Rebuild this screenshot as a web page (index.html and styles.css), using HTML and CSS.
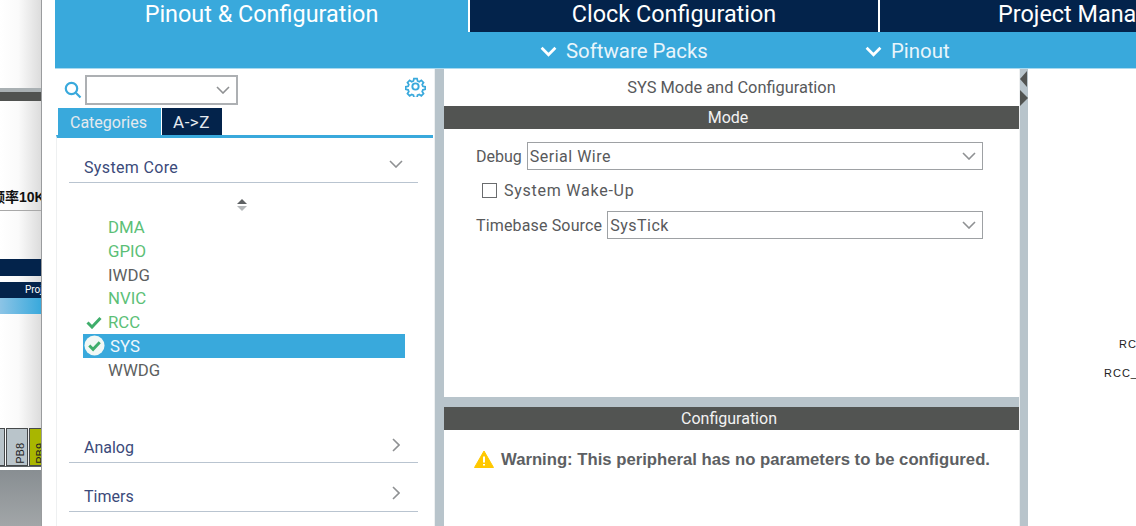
FILE: index.html
```html
<!DOCTYPE html>
<html lang="en">
<head>
    <meta charset="UTF-8">
    <meta name="viewport" content="width=device-width, initial-scale=1.0">
    <title>Pinout &amp; Configuration</title>
    <link rel="stylesheet" href="styles.css">
</head>
<body>
    <!-- window lying behind the tool -->
    <div class="back-window">
        <div class="back-bar"></div>
        <div class="back-text">频率10K</div>
        <div class="back-line"></div>
        <div class="back-navy"></div>
        <div class="back-tab">Proj</div>
        <div class="back-blue"></div>
        <div class="back-pins">
            <div class="pin"></div>
            <div class="pin"><span>PB8</span></div>
            <div class="pin pin-on"><span>PB9</span></div>
        </div>
        <div class="back-foot"></div>
    </div>

    <div class="app">
        <div class="top-tabs">
            <div class="top-tab active">Pinout &amp; Configuration</div>
            <div class="top-tab clock">Clock Configuration</div>
            <div class="top-tab project">Project Manager</div>
        </div>
        <div class="sub-bar">
            <div class="sub-item packs">
                <svg class="sub-chev" viewBox="0 0 16 10"><path d="M1.5 1.5 8 8l6.5-6.5"/></svg>
                Software Packs
            </div>
            <div class="sub-item">
                <svg class="sub-chev" viewBox="0 0 16 10"><path d="M1.5 1.5 8 8l6.5-6.5"/></svg>
                Pinout
            </div>
        </div>

        <div class="panes">
            <aside class="left-pane">
                <div class="search-row">
                    <svg class="search-icon" viewBox="0 0 18 18"><circle cx="7.5" cy="7.5" r="5.7"/><path d="M11.8 11.8 16.5 16.5"/></svg>
                    <div class="combo">
                        <svg class="chev" viewBox="0 0 14 8"><path d="M1 1l6 6 6-6"/></svg>
                    </div>
                    <svg class="gear" viewBox="0 0 24 24">
                        <circle cx="12" cy="12" r="3.6"/>
                        <path d="M10 2h4l.6 3 2.2.9 2.6-1.7 2.8 2.8-1.7 2.6.9 2.2 3 .6v3.2l-3 .6-.9 2.2 1.7 2.6-2.8 2.8-2.6-1.7-2.2.9-.6 3h-4l-.6-3-2.2-.9-2.6 1.7-2.8-2.8 1.7-2.6-.9-2.2-3-.6v-3.2l3-.6.9-2.2-1.7-2.6 2.8-2.8 2.6 1.7 2.2-.9z" transform="translate(1.2 1.2) scale(.9)"/>
                    </svg>
                </div>
                <div class="cat-tabs">
                    <div class="cat-tab active">Categories</div>
                    <div class="cat-tab">A-&gt;Z</div>
                </div>
                <div class="cat-body">
                    <div class="group-head">
                        <span>System Core</span>
                        <svg class="chev" viewBox="0 0 14 8"><path d="M1 1l6 6 6-6"/></svg>
                    </div>
                    <div class="sort-arrows">
                        <span class="sort-up"></span>
                        <span class="sort-down"></span>
                    </div>
                    <ul class="periph-list">
                        <li class="periph ok">DMA</li>
                        <li class="periph ok">GPIO</li>
                        <li class="periph">IWDG</li>
                        <li class="periph ok">NVIC</li>
                        <li class="periph ok">
                            <svg class="tick" viewBox="0 0 16 13"><path d="M1.5 6.5 6 11 14.5 2"/></svg>
                            RCC
                        </li>
                        <li class="periph selected">
                            <svg class="tick-round" viewBox="0 0 22 22"><circle cx="11" cy="11" r="10.5"/><path d="M5.5 11 9.5 15 16.5 7.5"/></svg>
                            SYS
                        </li>
                        <li class="periph">WWDG</li>
                    </ul>
                    <div class="group-head closed analog">
                        <span>Analog</span>
                        <svg class="chev-right" viewBox="0 0 8 14"><path d="M1 1l6 6-6 6"/></svg>
                    </div>
                    <div class="group-head closed timers">
                        <span>Timers</span>
                        <svg class="chev-right" viewBox="0 0 8 14"><path d="M1 1l6 6-6 6"/></svg>
                    </div>
                </div>
            </aside>

            <div class="split-v"></div>

            <section class="center-pane">
                <div class="mode-part">
                    <div class="pane-title">SYS Mode and Configuration</div>
                    <div class="dark-bar">Mode</div>
                    <div class="form-row debug-row">
                        <label class="form-label">Debug</label>
                        <div class="select">Serial Wire
                            <svg class="chev" viewBox="0 0 14 8"><path d="M1 1l6 6 6-6"/></svg>
                        </div>
                    </div>
                    <div class="check-row">
                        <span class="checkbox"></span>
                        <span>System Wake-Up</span>
                    </div>
                    <div class="form-row">
                        <label class="form-label wide">Timebase Source</label>
                        <div class="select">SysTick
                            <svg class="chev" viewBox="0 0 14 8"><path d="M1 1l6 6 6-6"/></svg>
                        </div>
                    </div>
                </div>
                <div class="split-h"></div>
                <div class="config-part">
                    <div class="dark-bar config-bar">Configuration</div>
                    <div class="warning">
                        <svg class="warn-icon" viewBox="0 0 20 18">
                            <path class="warn-tri" d="M10 1 19.5 17.5H.5z"/>
                            <path class="warn-mark" d="M10 6.5v6M10 14v1.6"/>
                        </svg>
                        Warning: This peripheral has no parameters to be configured.
                    </div>
                </div>
            </section>

            <div class="split-right">
                <span class="arrow-left"></span>
                <span class="arrow-right"></span>
            </div>

            <section class="chip-pane">
                <span class="pin-label rcc-a">RC</span>
                <span class="pin-label rcc-b">RCC_</span>
            </section>
        </div>
    </div>
</body>
</html>
```

FILE: styles.css
```css
/* Reset and Base Styles */
* {
    margin: 0;
    padding: 0;
    box-sizing: border-box;
    font-family: Roboto, 'Liberation Sans', sans-serif;
}

html, body {
    height: 526px;
    overflow: hidden;
}

body {
    display: flex;
    width: 1136px;
    background-color: #fff;
    color: #58595b;
}

svg {
    display: block;
    fill: none;
}

/* Window Behind */
.back-window {
    position: relative;
    flex: 0 0 42px;
    height: 526px;
    overflow: hidden;
    background: linear-gradient(90deg, #fff 0%, #fafafa 45%, #dcdcdc 100%);
    border-right: 1px solid #9a9c9e;
}

.back-bar {
    position: absolute;
    top: 88px;
    left: 0;
    width: 100%;
    height: 13px;
    background: linear-gradient(#a9b0b3 0 4px, #505250 4px);
}

.back-text {
    position: absolute;
    top: 188px;
    left: -9px;
    font-size: 14px;
    font-weight: bold;
    line-height: 18px;
    white-space: nowrap;
    color: #111;
    font-family: 'Liberation Sans', 'Noto Sans CJK SC', sans-serif;
}

.back-line {
    position: absolute;
    top: 210px;
    left: 0;
    width: 100%;
    height: 1px;
    background-color: #a8a8a8;
}

.back-navy {
    position: absolute;
    top: 259px;
    left: 0;
    width: 100%;
    height: 17px;
    background-color: #03234b;
}

.back-tab {
    position: absolute;
    top: 282px;
    left: 0;
    width: 100%;
    height: 16px;
    padding-left: 25px;
    background-color: #03234b;
    color: #fff;
    font-size: 10px;
    line-height: 16px;
    white-space: nowrap;
    overflow: hidden;
}

.back-blue {
    position: absolute;
    top: 298px;
    left: 0;
    width: 100%;
    height: 16px;
    background: linear-gradient(90deg, #8cc4e6, #39a9dc);
}

.back-pins {
    position: absolute;
    top: 428px;
    left: -17px;
    display: flex;
    gap: 1px;
    height: 38px;
}

.pin {
    display: flex;
    align-items: flex-end;
    justify-content: flex-end;
    width: 22px;
    background-color: #b9c4ca;
    border: 1px solid #46494b;
    padding: 0 2px 1px 0;
}

.pin span {
    writing-mode: vertical-rl;
    transform: rotate(180deg);
    font-size: 11px;
    line-height: 10px;
    font-family: 'Liberation Sans', sans-serif;
    color: #222;
}

.pin-on {
    background-color: #a9b600;
    padding-right: 5px;
}

.back-foot {
    position: absolute;
    top: 466px;
    left: 0;
    width: 100%;
    height: 60px;
    background: linear-gradient(#5d6366 0 1px, #fff 1px 4px, #888e92 4px, #a2a6a8);
}

/* Main Window */
.app {
    flex: 1;
    min-width: 0;
    padding-left: 13px;
    overflow: hidden;
}

.top-tabs {
    display: flex;
    gap: 2px;
    height: 32px;
    white-space: nowrap;
}

.top-tab {
    flex: 0 0 auto;
    background-color: #03234b;
    color: #fff;
    font-size: 23.4px;
    line-height: 28px;
    text-align: center;
}

.top-tab.active {
    width: 413px;
    background-color: #39a9dc;
}

.top-tab.clock {
    width: 408px;
}

.top-tab.project {
    width: 260px;
    text-align: left;
    text-indent: 118px;
}

.sub-bar {
    display: flex;
    align-items: center;
    height: 37px;
    padding: 2px 0 0 485px;
    background-color: #39a9dc;
    border-bottom: 1px solid #a9d9ef;
    color: #e9f5fb;
    font-size: 20.4px;
}

.sub-item {
    display: flex;
    align-items: center;
    gap: 9px;
}

.sub-item.packs {
    width: 325px;
}

.sub-chev {
    width: 17px;
    height: 11px;
    stroke: #fff;
    stroke-width: 2.6;
}

/* Panes */
.panes {
    display: flex;
    height: 457px;
}

.left-pane {
    flex: 0 0 379px;
    padding: 0 1px;
}

.search-row {
    display: flex;
    align-items: center;
    height: 39px;
    padding: 3px 7px 0 8px;
}

.search-icon {
    width: 18px;
    height: 18px;
    margin-right: 3px;
    stroke: #39a9dc;
    stroke-width: 2.2;
}

.combo {
    position: relative;
    width: 153px;
    height: 30px;
    border: 2px solid #adb0b3;
}

.chev {
    position: absolute;
    top: 50%;
    right: 6px;
    width: 14px;
    height: 8px;
    margin-top: -4px;
    stroke: #8f9193;
    stroke-width: 1.6;
}

.gear {
    width: 21px;
    height: 21px;
    margin-left: auto;
    margin-top: -8px;
    stroke: #39a9dc;
    stroke-width: 2.2;
}

.cat-tabs {
    display: flex;
    gap: 1px;
    height: 27px;
    padding-left: 2px;
}

.cat-tab {
    width: 60px;
    padding-right: 1px;
    background-color: #03234b;
    color: #e5e9ee;
    font-size: 17px;
    line-height: 29px;
    letter-spacing: .5px;
    text-align: center;
}

.cat-tab.active {
    width: 103px;
    padding-right: 2px;
    background-color: #39a9dc;
    font-size: 16px;
    letter-spacing: 0;
}

.cat-body {
    position: relative;
    height: 391px;
    padding: 0 15px 0 12px;
    border-top: 3px solid #39a9dc;
    border-left: 1px solid #eef0f1;
}

.group-head {
    position: relative;
    height: 45px;
    padding: 19px 0 0 15px;
    border-bottom: 1px solid #b9c4d0;
    color: #3b4a7a;
    font-size: 16px;
    line-height: 22px;
}

.group-head .chev {
    right: 15px;
    margin-top: 0;
}

.group-head:first-child span {
    letter-spacing: .35px;
}

.chev-right {
    position: absolute;
    top: 17px;
    right: 18px;
    width: 8px;
    height: 14px;
    stroke: #8f9193;
    stroke-width: 1.6;
}

.sort-arrows {
    display: flex;
    flex-direction: column;
    align-items: center;
    gap: 2px;
    width: 10px;
    margin: 16px 0 0 168px;
}

.sort-up,
.sort-down {
    display: block;
    border-left: 5px solid transparent;
    border-right: 5px solid transparent;
}

.sort-up {
    border-bottom: 5px solid #5e6163;
}

.sort-down {
    border-top: 5px solid #b4b7b9;
}

.periph-list {
    list-style: none;
    margin-top: 4px;
}

.periph {
    position: relative;
    height: 23.8px;
    width: 322px;
    margin-left: 14px;
    padding-left: 25px;
    font-size: 16.8px;
    line-height: 24px;
    color: #5d5f61;
}

.periph.ok {
    color: #5cbf77;
}

.periph.selected {
    padding-left: 27px;
    background-color: #39a9dc;
    color: #eef8fc;
}

.tick {
    position: absolute;
    top: 6px;
    left: 3px;
    width: 16px;
    height: 13px;
    stroke: #3fae6b;
    stroke-width: 3;
}

.tick-round {
    position: absolute;
    top: 1px;
    left: 1px;
    width: 21px;
    height: 21px;
}

.tick-round circle {
    fill: #f2f8f5;
}

.tick-round path {
    stroke: #3fae6b;
    stroke-width: 3;
}

.group-head.analog {
    margin-top: 29px;
    height: 52px;
    padding-top: 26px;
}

.group-head.analog .chev-right {
    top: 27px;
}

.group-head.timers {
    height: 49px;
    padding-top: 23px;
}

.group-head.timers .chev-right {
    top: 23px;
}

.split-v {
    flex: 0 0 10px;
    background-color: #b8c4cb;
    border-left: 1px solid #eef0f1;
}

.center-pane {
    display: flex;
    flex-direction: column;
    flex: 0 0 575px;
}

.mode-part {
    height: 328px;
}

.pane-title {
    height: 37px;
    padding-top: 8px;
    text-align: center;
    font-size: 16.4px;
    line-height: 22px;
}

.dark-bar {
    height: 23px;
    padding-right: 7px;
    background-color: #525452;
    color: #f2f2f2;
    font-size: 16px;
    line-height: 23px;
    text-align: center;
}

.config-bar {
    line-height: 24px;
    padding-right: 5px;
}

.form-row {
    display: flex;
    align-items: center;
    padding-left: 32px;
    height: 28px;
    gap: 5px;
    font-size: 16px;
}

.debug-row {
    margin-top: 13px;
}

.form-label.wide {
    letter-spacing: .15px;
}

.select {
    position: relative;
    flex: 1;
    height: 28px;
    margin-right: 36px;
    padding-left: 2px;
    border: 1.5px solid #9ea1a4;
    line-height: 27px;
    letter-spacing: .5px;
}

.select .chev {
    right: 6px;
}

.check-row {
    display: flex;
    align-items: center;
    gap: 7px;
    height: 41px;
    padding-left: 38px;
    font-size: 16px;
    letter-spacing: .75px;
}

.checkbox {
    width: 15px;
    height: 15px;
    border: 1.5px solid #6a6c6e;
}

.split-h {
    flex: 0 0 10px;
    background-color: #b8c4cb;
}

.config-part {
    flex: 1;
}

.warning {
    display: flex;
    align-items: center;
    gap: 7px;
    margin-top: 20px;
    padding-left: 30px;
    color: #5d5f63;
    font-family: 'Liberation Sans', sans-serif;
    font-size: 16.7px;
    font-weight: bold;
    line-height: 20px;
    white-space: nowrap;
}

.warn-icon {
    width: 20px;
    height: 18px;
    margin-top: -2px;
}

.warn-tri {
    fill: #ffc800;
    stroke: #ffc800;
    stroke-linejoin: round;
}

.warn-mark {
    stroke: #fff;
    stroke-width: 2;
}

.split-right {
    position: relative;
    flex: 0 0 9px;
    background-color: #b8c4cb;
    border-left: 1px solid #eef0f1;
}

.arrow-left,
.arrow-right {
    position: absolute;
    border-top: 8px solid transparent;
    border-bottom: 8px solid transparent;
}

.arrow-left {
    top: 2px;
    left: 0;
    border-right: 7px solid #525452;
}

.arrow-right {
    top: 21px;
    left: 0;
    border-left: 8px solid #525452;
}

.chip-pane {
    position: relative;
    flex: 1;
}

.pin-label {
    position: absolute;
    color: #222;
    font-size: 11px;
    letter-spacing: 1px;
    font-family: 'Liberation Sans', sans-serif;
    white-space: nowrap;
}

.rcc-a {
    top: 269px;
    left: 91px;
}

.rcc-b {
    top: 298px;
    left: 76px;
}
```
